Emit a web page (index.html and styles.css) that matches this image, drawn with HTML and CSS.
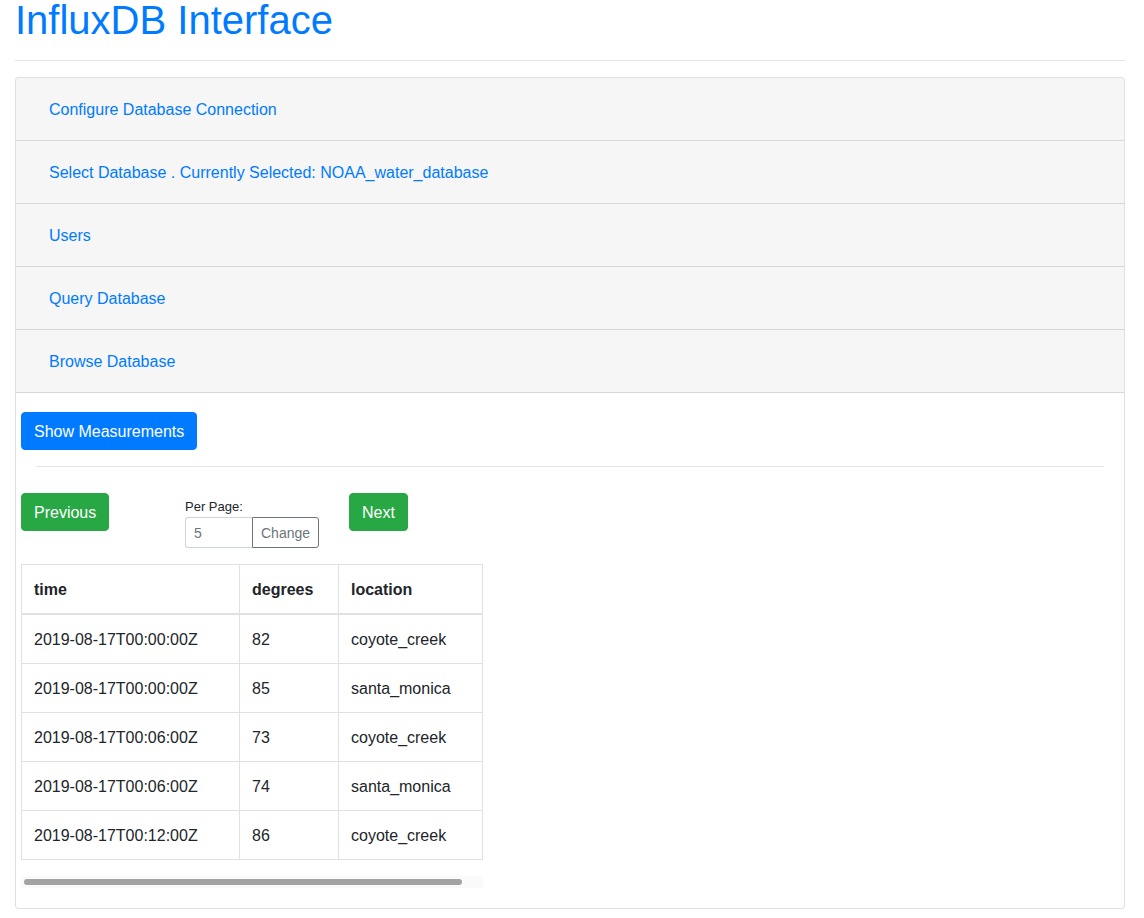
FILE: index.html
```html
<!DOCTYPE html>
<html lang="en">
<head>
<meta charset="utf-8">
<title>InfluxDB Interface</title>
<link rel="stylesheet" href="styles.css">
</head>
<body>
<div class="container">
  <h1 class="title">InfluxDB Interface</h1>
  <hr class="rule">
  <div class="card">
    <div class="card-header first"><button class="btn-link">Configure Database Connection</button></div>
    <div class="card-header"><button class="btn-link">Select Database . Currently Selected: NOAA_water_database</button></div>
    <div class="card-header"><button class="btn-link">Users</button></div>
    <div class="card-header"><button class="btn-link">Query Database</button></div>
    <div class="card-header"><button class="btn-link">Browse Database</button></div>
    <div class="card-body">
      <button class="btn btn-primary">Show Measurements</button>
      <hr class="divider">
      <div class="pager">
        <div class="pager-cell"><button class="btn btn-success">Previous</button></div>
        <div class="pager-cell per-page">
          <label class="per-label">Per Page:</label>
          <div class="input-group">
            <input class="form-input" type="text" placeholder="5">
            <button class="btn-change">Change</button>
          </div>
        </div>
        <div class="pager-cell"><button class="btn btn-success">Next</button></div>
      </div>
      <div class="table-wrap">
        <table class="data-table">
          <colgroup>
            <col class="c-time"><col class="c-deg"><col class="c-loc">
          </colgroup>
          <thead>
            <tr><th>time</th><th>degrees</th><th>location</th></tr>
          </thead>
          <tbody>
            <tr><td>2019-08-17T00:00:00Z</td><td>82</td><td>coyote_creek</td></tr>
            <tr><td>2019-08-17T00:00:00Z</td><td>85</td><td>santa_monica</td></tr>
            <tr><td>2019-08-17T00:06:00Z</td><td>73</td><td>coyote_creek</td></tr>
            <tr><td>2019-08-17T00:06:00Z</td><td>74</td><td>santa_monica</td></tr>
            <tr><td>2019-08-17T00:12:00Z</td><td>86</td><td>coyote_creek</td></tr>
          </tbody>
        </table>
        <div class="scrollbar"><div class="scroll-thumb"></div></div>
      </div>
    </div>
  </div>
</div>
</body>
</html>
```

FILE: styles.css
```css
* { box-sizing: border-box; }
html, body { margin: 0; padding: 0; }
body {
  font-family: "Liberation Sans", Arial, sans-serif;
  font-size: 16px;
  line-height: 1.5;
  color: #212529;
  background: #fff;
}
.container {
  width: 1140px;
  padding: 0 15px;
}
.title {
  margin: -4px 0 8px;
  font-size: 40px;
  line-height: 48px;
  font-weight: 400;
  color: #007bff;
}
.rule {
  margin: 16px 0;
  border: 0;
  border-top: 1px solid rgba(0,0,0,.1);
  height: 0;
}
.card {
  border: 1px solid rgba(0,0,0,.125);
  border-radius: 4px;
  background: #fff;
}
.card-header {
  padding: 12px 20px;
  background: rgba(0,0,0,.035);
  border-bottom: 1px solid rgba(0,0,0,.125);
}
.card-header.first { border-radius: 3px 3px 0 0; }
.btn-link {
  font-family: inherit;
  font-size: 16px;
  line-height: 24px;
  padding: 7px 12px 5px;
  border: 1px solid transparent;
  background: none;
  color: #007bff;
  display: block;
  cursor: pointer;
}
.card-body {
  padding: 19px 5px 20px;
}
.btn {
  font-family: inherit;
  font-size: 16px;
  line-height: 24px;
  padding: 7px 12px 5px;
  border: 1px solid transparent;
  border-radius: 4px;
  color: #fff;
  display: inline-block;
  cursor: pointer;
}
.btn-primary { background: #007bff; border-color: #007bff; }
.btn-success { background: #28a745; border-color: #28a745; }
.divider {
  margin: 16px 15px;
  border: 0;
  border-top: 1px solid rgba(0,0,0,.1);
  height: 0;
}
.pager {
  display: flex;
  align-items: flex-start;
  padding-top: 10px;
}
.pager-cell { width: 164px; }
.pager-cell:last-child { width: auto; }
.per-page { padding-top: 4px; }
.per-label {
  display: block;
  font-size: 13px;
  line-height: 19.5px;
}
.input-group { display: flex; }
.form-input {
  width: 67px;
  height: 31px;
  padding: 5px 8px 3px;
  font-family: inherit;
  font-size: 14px;
  line-height: 21px;
  border: 1px solid #ced4da;
  border-right: 0;
  border-radius: 3px 0 0 3px;
  color: #495057;
  outline: none;
}
.form-input::placeholder { color: #6c757d; }
.btn-change {
  width: 67px;
  height: 31px;
  padding: 5px 8px 3px;
  font-family: inherit;
  font-size: 14px;
  line-height: 21px;
  border: 1px solid #6c757d;
  border-radius: 0 3px 3px 0;
  background: #fff;
  color: #6c757d;
}
.table-wrap {
  width: 462px;
  margin-top: 16px;
}
.data-table {
  width: 461px;
  table-layout: fixed;
  border-collapse: collapse;
  border: 1px solid #dee2e6;
}
.c-time { width: 218px; }
.c-deg { width: 99px; }
.c-loc { width: 144px; }
.data-table th, .data-table td {
  padding: 13px 12px 11px;
  border: 1px solid #dee2e6;
  text-align: left;
  vertical-align: top;
  line-height: 24px;
  white-space: nowrap;
}
.data-table th {
  font-weight: 700;
  border-bottom-width: 2px;
}
.scrollbar {
  margin-top: 16px;
  height: 12px;
  background: #fafafa;
  padding: 3px;
}
.scroll-thumb {
  width: 438px;
  height: 6px;
  border-radius: 3px;
  background: #a3a3a3;
}
```
